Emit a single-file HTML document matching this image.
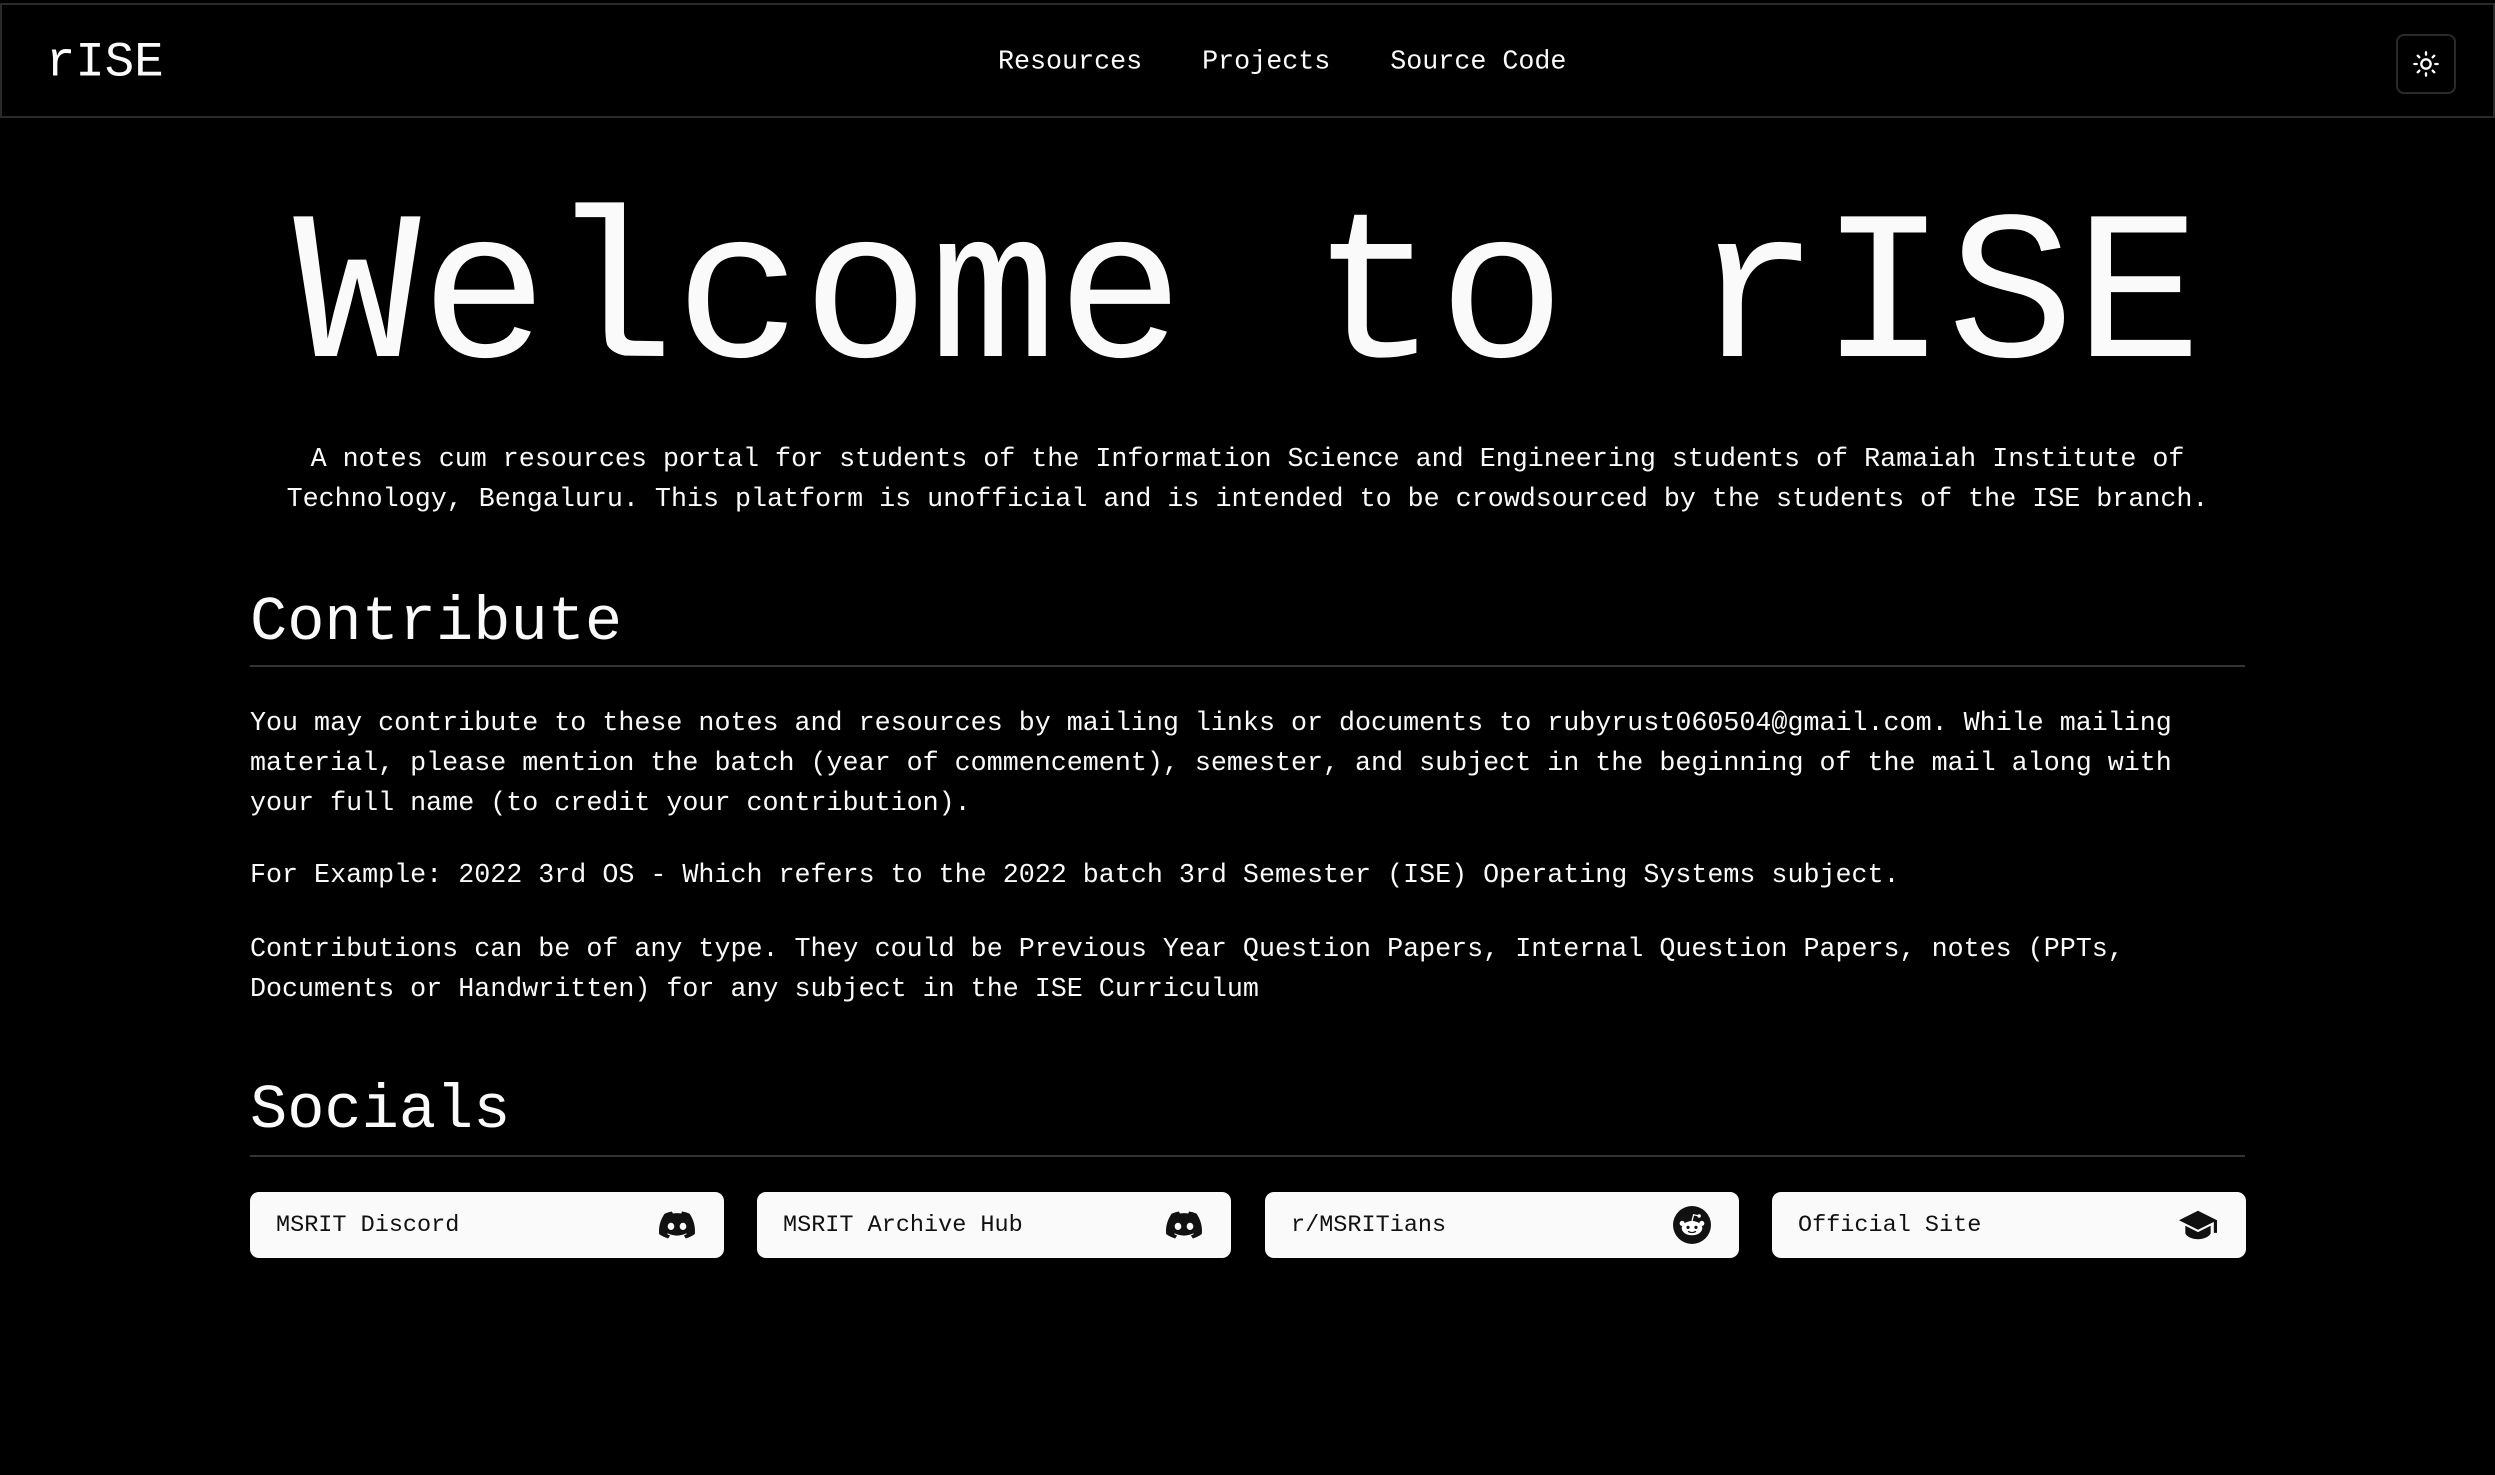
<!DOCTYPE html>
<html><head><meta charset="utf-8"><style>
*{margin:0;padding:0;box-sizing:border-box}
body{width:2495px;height:1475px;background:#000;color:#fafafa;font-family:"Liberation Mono",monospace;position:relative;overflow:hidden}
.nav{position:absolute;left:0;top:3px;width:2495px;height:115px;border-top:2px solid #2a2a2a;border-bottom:2px solid #2a2a2a;border-left:2px solid #2a2a2a;border-right:2px solid #2a2a2a}
.logo{position:absolute;left:44px;top:58px;transform:translateY(-50%);font-size:49px;line-height:1}
.links{position:absolute;left:996px;top:58px;transform:translateY(-50%);font-size:26.7px;white-space:pre;line-height:1}
.links span{margin-right:60px}
.tog{position:absolute;left:2394px;top:29px;width:60px;height:60px;border:2px solid #2a2a2a;border-radius:8px;display:flex;align-items:center;justify-content:center}
.abs{position:absolute;white-space:pre}
.h1{left:0;width:2495px;text-align:center;font-size:212px;line-height:212px;top:194px}
.p{font-size:26.7px;line-height:40px}
.c{left:0;width:2495px;text-align:center}
.h2{left:250px;font-size:62px;line-height:62px}
.rule{position:absolute;left:250px;width:1995px;height:2px;background:#333}
.card{position:absolute;top:1192px;width:474px;height:66px;background:#fafafa;border-radius:9px;color:#111;font-size:23.5px;display:flex;align-items:center;padding-left:26px}
.card svg{position:absolute;right:28px;top:15px}
</style></head><body>
<div class="nav">
<div class="logo">rISE</div>
<div class="links"><span>Resources</span><span>Projects</span>Source Code</div>
<div class="tog"><svg width="28" height="28" viewBox="0 0 24 24" fill="none" stroke="#fff" stroke-width="2" stroke-linecap="round"><circle cx="12" cy="12" r="4"/><path d="M12 2v2M12 20v2M4.9 4.9l1.4 1.4M17.7 17.7l1.4 1.4M2 12h2M20 12h2M4.9 19.1l1.4-1.4M17.7 6.3l1.4-1.4"/></svg></div>
</div>
<div class="abs h1">Welcome to rISE</div>
<div class="abs p c" style="top:440px">A notes cum resources portal for students of the Information Science and Engineering students of Ramaiah Institute of</div>
<div class="abs p c" style="top:480px">Technology, Bengaluru. This platform is unofficial and is intended to be crowdsourced by the students of the ISE branch.</div>
<div class="abs h2" style="top:592px">Contribute</div>
<div class="rule" style="top:665px"></div>
<div class="abs p" style="left:250px;top:704px">You may contribute to these notes and resources by mailing links or documents to rubyrust060504@gmail.com. While mailing
material, please mention the batch (year of commencement), semester, and subject in the beginning of the mail along with
your full name (to credit your contribution).</div>
<div class="abs p" style="left:250px;top:856px">For Example: 2022 3rd OS - Which refers to the 2022 batch 3rd Semester (ISE) Operating Systems subject.</div>
<div class="abs p" style="left:250px;top:930px">Contributions can be of any type. They could be Previous Year Question Papers, Internal Question Papers, notes (PPTs,
Documents or Handwritten) for any subject in the ISE Curriculum</div>
<div class="abs h2" style="top:1080px">Socials</div>
<div class="rule" style="top:1155px"></div>
<div class="card" style="left:250px">MSRIT Discord<svg width="38" height="36" viewBox="0 0 24 24"><path fill="#111" d="M20.3 4.4A19.8 19.8 0 0 0 15.4 3l-.6 1.3a18.3 18.3 0 0 0-5.5 0L8.6 3a19.7 19.7 0 0 0-4.9 1.5C.6 9.1-.3 13.6.1 18.1A19.9 19.9 0 0 0 6.1 21l1.3-2a13 13 0 0 1-2-1l.5-.4a14.2 14.2 0 0 0 12.2 0l.5.4c-.6.4-1.3.7-2 1l1.3 2a19.8 19.8 0 0 0 6-3c.5-5.2-.9-9.7-3.6-13.7zM8 15.3c-1.2 0-2.2-1.1-2.2-2.4S6.8 10.5 8 10.5s2.2 1.1 2.2 2.4-1 2.4-2.2 2.4zm8 0c-1.2 0-2.2-1.1-2.2-2.4s1-2.4 2.2-2.4 2.2 1.1 2.2 2.4-1 2.4-2.2 2.4z"/></svg></div>
<div class="card" style="left:757px">MSRIT Archive Hub<svg width="38" height="36" viewBox="0 0 24 24"><path fill="#111" d="M20.3 4.4A19.8 19.8 0 0 0 15.4 3l-.6 1.3a18.3 18.3 0 0 0-5.5 0L8.6 3a19.7 19.7 0 0 0-4.9 1.5C.6 9.1-.3 13.6.1 18.1A19.9 19.9 0 0 0 6.1 21l1.3-2a13 13 0 0 1-2-1l.5-.4a14.2 14.2 0 0 0 12.2 0l.5.4c-.6.4-1.3.7-2 1l1.3 2a19.8 19.8 0 0 0 6-3c.5-5.2-.9-9.7-3.6-13.7zM8 15.3c-1.2 0-2.2-1.1-2.2-2.4S6.8 10.5 8 10.5s2.2 1.1 2.2 2.4-1 2.4-2.2 2.4zm8 0c-1.2 0-2.2-1.1-2.2-2.4s1-2.4 2.2-2.4 2.2 1.1 2.2 2.4-1 2.4-2.2 2.4z"/></svg></div>
<div class="card" style="left:1265px">r/MSRITians<svg width="38" height="38" viewBox="0 0 24 24" style="top:14px"><circle cx="12" cy="12" r="12" fill="#111"/><ellipse cx="12" cy="14" rx="6.5" ry="4.5" fill="#fff"/><circle cx="5.8" cy="11" r="1.6" fill="#fff"/><circle cx="18.2" cy="11" r="1.6" fill="#fff"/><circle cx="9.5" cy="13.5" r="1" fill="#111"/><circle cx="14.5" cy="13.5" r="1" fill="#111"/><path d="M9.5 16c1.5 1 3.5 1 5 0" stroke="#111" stroke-width=".8" fill="none"/><path d="M12 9.5l1-4 3 .7" stroke="#fff" stroke-width=".8" fill="none"/><circle cx="16.5" cy="6.3" r="1.1" fill="#fff"/></svg></div>
<div class="card" style="left:1772px">Official Site<svg width="40" height="38" viewBox="0 0 24 24" style="top:14px"><path fill="#111" d="M12 3L0 9l12 6 10-5v7h2V9L12 3z"/><path fill="#111" d="M4 12.5v4.5c0 1.7 3.6 4 8 4s8-2.3 8-4v-4.5l-8 4-8-4z"/></svg></div>
</body></html>
